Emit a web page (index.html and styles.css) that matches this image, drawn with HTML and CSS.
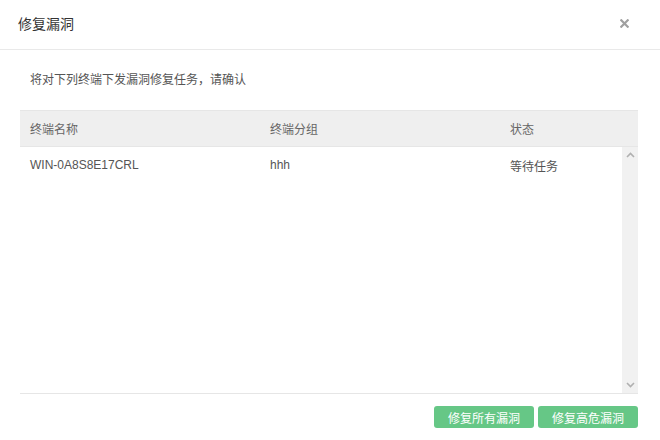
FILE: index.html
```html
<!DOCTYPE html>
<html lang="zh">
<head>
<meta charset="utf-8">
<link rel="stylesheet" href="styles.css">
</head>
<body>
<div class="dialog">
  <div class="header">
    <span class="title">修复漏洞</span>
    <span class="close">
      <svg width="9" height="9" viewBox="0 0 9 9"><path d="M1.3 1.3 L7.7 7.7 M7.7 1.3 L1.3 7.7" stroke="#a0a0a0" stroke-width="2.2" stroke-linecap="square"/></svg>
    </span>
  </div>
  <div class="content">
    <p class="desc">将对下列终端下发漏洞修复任务，请确认</p>
    <div class="table">
      <div class="thead">
        <div class="c1">终端名称</div>
        <div class="c2">终端分组</div>
        <div class="c3">状态</div>
      </div>
      <div class="tbody">
        <div class="rows">
          <div class="row">
            <div class="c1">WIN-0A8S8E17CRL</div>
            <div class="c2">hhh</div>
            <div class="c3">等待任务</div>
          </div>
        </div>
        <div class="scrollbar">
          <svg width="9" height="6" viewBox="0 0 9 6"><path d="M1 5 L4.5 1.5 L8 5" fill="none" stroke="#b0b0b0" stroke-width="1.6"/></svg>
          <svg width="9" height="6" viewBox="0 0 9 6"><path d="M1 1 L4.5 4.5 L8 1" fill="none" stroke="#b0b0b0" stroke-width="1.6"/></svg>
        </div>
      </div>
    </div>
    <div class="actions">
      <button class="btn">修复所有漏洞</button>
      <button class="btn">修复高危漏洞</button>
    </div>
  </div>
</div>
</body>
</html>
```

FILE: styles.css
```css
* { box-sizing: border-box; }
html, body {
  margin: 0;
  padding: 0;
  background: #fff;
  font-family: "Liberation Sans", "Noto Sans CJK SC", sans-serif;
  font-size: 12px;
  color: #666;
}
.dialog {
  width: 660px;
  height: 440px;
  background: #fff;
}
.header {
  height: 50px;
  border-bottom: 1px solid #e9e9e9;
  display: flex;
  align-items: center;
  justify-content: space-between;
  padding: 0 31px 0 18px;
}
.title {
  font-size: 14px;
  color: #333;
  margin-top: -3px;
}
.close {
  display: flex;
  margin-top: -3px;
}
.content {
  padding: 0 22px 0 20px;
}
.desc {
  margin: 0;
  padding: 21px 10px 0;
  height: 60px;
  line-height: 18px;
  color: #555;
}
.table {
  width: 618px;
}
.thead {
  display: flex;
  height: 37px;
  align-items: center;
  background: #efefef;
  border-top: 1px solid #e6e6e6;
  border-bottom: 1px solid #e6e6e6;
  color: #666;
}
.c1, .c2 { width: 240px; padding-left: 10px; }
.c3 { flex: 1; padding-left: 10px; }
.tbody {
  display: flex;
  height: 247px;
  border-bottom: 1px solid #e6e6e6;
}
.rows { flex: 1; }
.row {
  display: flex;
  height: 36px;
  align-items: center;
  color: #555;
}
.scrollbar {
  width: 16px;
  background: #f1f1f1;
  display: flex;
  flex-direction: column;
  justify-content: space-between;
  align-items: center;
  padding: 5px 0 5px;
}
.actions {
  display: flex;
  justify-content: flex-end;
  gap: 4px;
  padding-top: 12px;
  width: 618px;
}
.btn {
  width: 100px;
  height: 22px;
  border: none;
  border-radius: 3px;
  background: #66c786;
  color: #fff;
  font-family: "Liberation Sans", "Noto Sans CJK SC", sans-serif;
  font-size: 12px;
  padding: 0;
}
```
